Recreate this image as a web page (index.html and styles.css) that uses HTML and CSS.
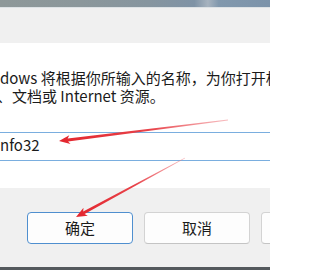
FILE: index.html
```html
<!DOCTYPE html>
<html lang="zh-CN">
<head>
<meta charset="utf-8">
<title>运行</title>
<link rel="stylesheet" href="styles.css">
</head>
<body>
<div class="screen">
  <div class="desktop"></div>
  <div class="window">
    <div class="titlebar"></div>
    <div class="content">
      <div class="desc">
        <div class="line">dows 将根据你所输入的名称，为你打开相应</div>
        <div class="line line2">、文档或 Internet 资源。</div>
      </div>
      <div class="field">nfo32</div>
    </div>
    <div class="footer">
      <button class="btn btn-default">确定</button>
      <button class="btn">取消</button>
      <button class="btn">浏览(B)...</button>
    </div>
  </div>
  <div class="taskbar"></div>
  <svg class="annot" width="270" height="270" viewBox="0 0 270 270">
    <defs>
      <linearGradient id="g1" gradientUnits="userSpaceOnUse" x1="228" y1="120" x2="59" y2="141">
        <stop offset="0" stop-color="#f07a80" stop-opacity="0.5"/>
        <stop offset="0.45" stop-color="#e8434a"/>
        <stop offset="1" stop-color="#e3262e"/>
      </linearGradient>
      <linearGradient id="g2" gradientUnits="userSpaceOnUse" x1="185" y1="158" x2="76" y2="217">
        <stop offset="0" stop-color="#f07a80" stop-opacity="0.5"/>
        <stop offset="0.45" stop-color="#e8434a"/>
        <stop offset="1" stop-color="#e3262e"/>
      </linearGradient>
    </defs>
    <polygon fill="url(#g1)" points="59,141 70.5,144.1 68.1,141.4 228.05,120.4 227.95,119.6 67.7,138.4 69.3,135.2"/>
    <polygon fill="url(#g2)" points="76,217 87.8,215.7 84.6,214.0 185.2,158.35 184.8,157.65 83.2,211.4 83.5,207.8"/>
  </svg>
</div>
</body>
</html>
```
FILE: styles.css
```css
html, body {
  margin: 0;
  padding: 0;
}
body {
  font-family: "Noto Sans CJK SC", "Noto Sans", sans-serif;
  color: #1b1b1b;
  background: #fff;
}
.screen {
  position: relative;
  width: 270px;
  height: 270px;
  overflow: hidden;
  display: flex;
  flex-direction: column;
}
.desktop {
  height: 7px;
  flex-shrink: 0;
  background: linear-gradient(90deg, #8e9899 0%, #8b979b 30%, #86959f 55%, #7f93a6 72%, #a7b3bf 77%, #8198ad 81%, #7c93aa 100%);
}
.window {
  display: flex;
  flex-direction: column;
  flex-shrink: 0;
}
.titlebar {
  height: 35px;
  background: #f0f0f0;
  border-top: 1px solid #dde2e5;
}
.content {
  background: #fff;
  padding: 26px 0 27px;
}
.desc {
  font-size: 15px;
  line-height: 18px;
  white-space: nowrap;
}
.line2 {
  margin-left: -3px;
}
.field {
  margin: 27px -10px 0;
  height: 29px;
  box-sizing: border-box;
  border: 1px solid #7aaedf;
  background: #fff;
  padding: 3px 0 0 9px;
  font-size: 15px;
  line-height: 18px;
  white-space: nowrap;
}
.footer {
  height: 79px;
  box-sizing: border-box;
  background: #f0f0f0;
  padding: 24px 0 0 27px;
  display: flex;
  gap: 11px;
  align-items: flex-start;
}
.btn {
  flex-shrink: 0;
  width: 106px;
  height: 32px;
  box-sizing: border-box;
  border: 1px solid #d3d3d3;
  border-bottom-color: #c4c4c4;
  border-radius: 4px;
  background: #fdfdfd;
  font-family: "Noto Sans CJK SC", "Noto Sans", sans-serif;
  font-size: 15px;
  line-height: 18px;
  color: #1b1b1b;
  padding: 0;
}
.btn-default {
  border-color: #4f8fcf;
}
.taskbar {
  flex: 1;
  background: #54595d;
}
.annot {
  position: absolute;
  left: 0;
  top: 0;
  pointer-events: none;
}
```
